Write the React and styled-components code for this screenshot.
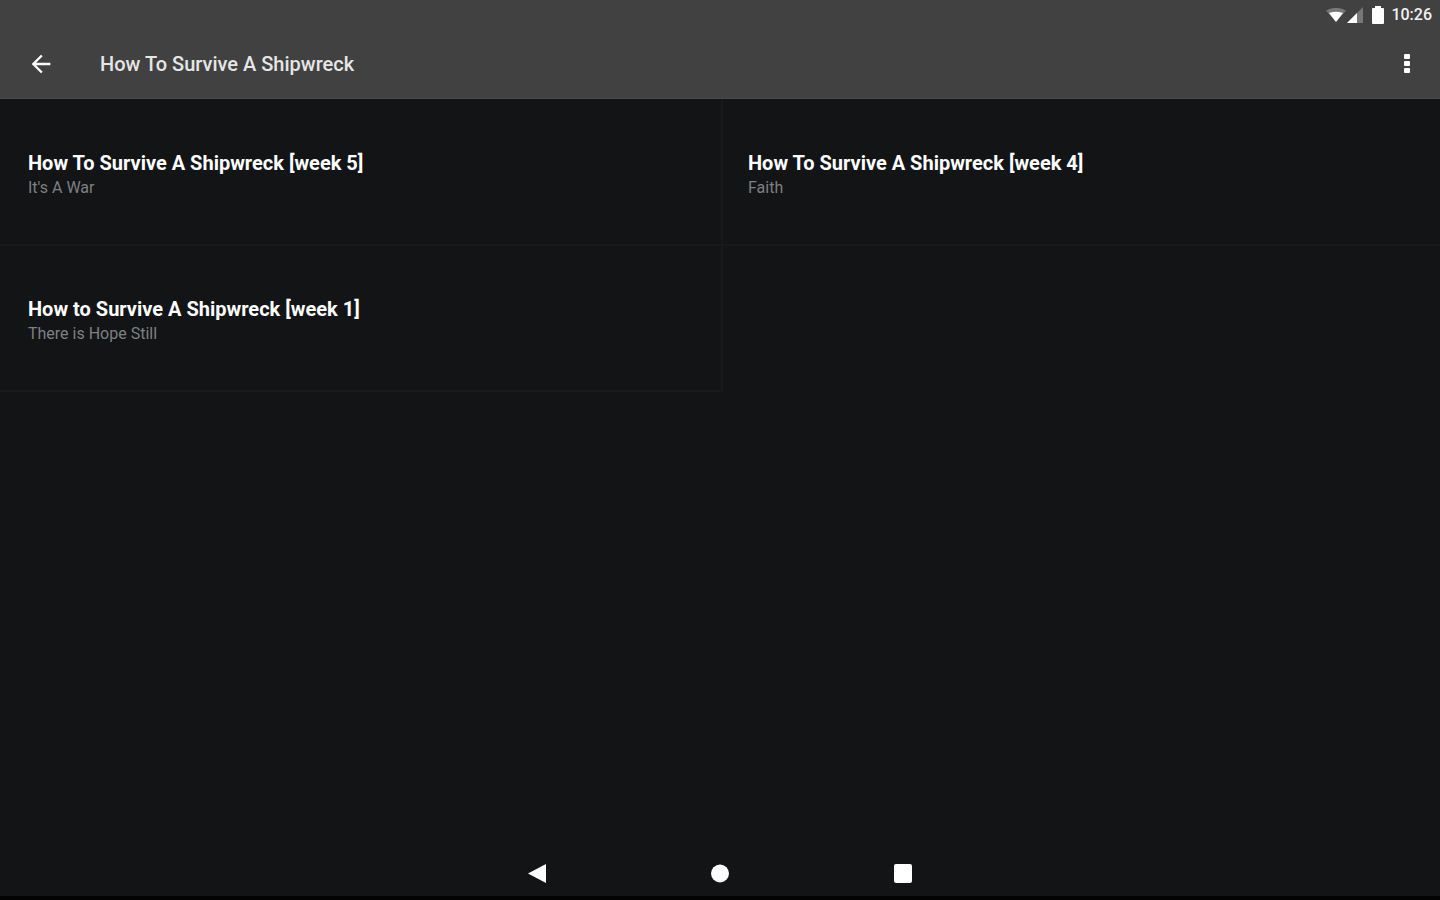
import React from 'react'
import styled, { createGlobalStyle } from 'styled-components'


const GlobalStyle = createGlobalStyle`
* {
    box-sizing: border-box;
}

body {
    margin: 0;
    background-color: #121416;
    color: #fff;
    font-family: Roboto, "Liberation Sans", sans-serif;
}
`

const Page = styled.div`
    display: flex;
    flex-direction: column;
    min-height: 100vh;
    border-bottom: 4px solid #040304;
`

const Header = styled.header`
    background-color: #414141;
    border-bottom: 1px solid #4a4a4a;
`

const StatusBar = styled.div`
    display: flex;
    justify-content: flex-end;
    align-items: center;
    height: 30px;
    padding: 0 8px;
    color: #f2f2f2;
`

const StatusIcon = styled.svg`
    display: block;
    width: ${props => props.$width}px;
    height: 18px;
    margin-right: ${props => props.$gap}px;
`

const Clock = styled.time`
    font-size: 16px;
    line-height: 20px;
    font-weight: 500;
`

const Toolbar = styled.div`
    display: flex;
    align-items: center;
    height: 68px;
    padding: 0 16px 0 24px;
`

const IconButton = styled.button`
    display: flex;
    justify-content: center;
    align-items: center;
    width: ${props => props.$width}px;
    height: 48px;
    padding: 0;
    border: none;
    background: none;
    color: #fff;
    cursor: pointer;
`

const Title = styled.h1`
    flex: 1;
    margin: 0;
    padding-left: 42px;
    color: #e6e6e6;
    font-size: 20px;
    line-height: 28px;
    font-weight: 500;
`

const Grid = styled.ul`
    flex: 1;
    display: grid;
    grid-template-columns: 1fr 1fr;
    align-content: start;
    margin: 0;
    padding: 1px 0 0;
    list-style: none;
`

const Cell = styled.li`
    border-bottom: 2px solid #17191b;

    &:nth-child(odd) {
        border-right: 2px solid #17191b;
        margin-right: -3px;
    }
`

const CellLink = styled.a`
    display: flex;
    flex-direction: column;
    justify-content: center;
    height: 144px;
    padding: 6px 28px 0;
    color: inherit;
    text-decoration: none;
`

const CellTitle = styled.span`
    font-size: 20px;
    line-height: 26px;
    font-weight: 700;
`

const CellSubtitle = styled.span`
    color: #7e8083;
    font-size: 16px;
    line-height: 24px;
`

const NavBar = styled.nav`
    display: flex;
    justify-content: center;
    gap: 135px;
    height: 46px;
`


const messages = [
    { title: 'How To Survive A Shipwreck [week 5]', subtitle: "It's A War" },
    { title: 'How To Survive A Shipwreck [week 4]', subtitle: 'Faith' },
    { title: 'How to Survive A Shipwreck [week 1]', subtitle: 'There is Hope Still' },
]


const App = () => {
    return (
        <Page>
            <GlobalStyle />
            <Header>
                <StatusBar>
                    <StatusIcon $width={20} $gap={0} viewBox='0 0 20 18' aria-label='Wi-Fi'>
                        <path d='M0 4.5Q10-1 20 4.5L10 16Z' fill='#777' />
                        <path d='M3 7Q10 4.5 17 7L10 16Z' fill='#fff' />
                    </StatusIcon>
                    <StatusIcon $width={18} $gap={8} viewBox='0 0 18 18' aria-label='Signal'>
                        <path d='M17 1V17H1Z' fill='#777' />
                        <path d='M11 7V17H1Z' fill='#fff' />
                    </StatusIcon>
                    <StatusIcon $width={12} $gap={7} viewBox='0 0 12 18' aria-label='Battery'>
                        <path d='M3 0h6v2h2a1 1 0 0 1 1 1v14a1 1 0 0 1-1 1H1a1 1 0 0 1-1-1V3a1 1 0 0 1 1-1h2z' fill='#fff' />
                    </StatusIcon>
                    <Clock>10:26</Clock>
                </StatusBar>
                <Toolbar>
                    <IconButton $width={34} aria-label='Back'>
                        <svg width='28' height='28' viewBox='0 0 24 24' fill='currentColor'>
                            <path d='M20 11H7.83l5.59-5.59L12 4l-8 8 8 8 1.41-1.41L7.83 13H20v-2z' />
                        </svg>
                    </IconButton>
                    <Title>How To Survive A Shipwreck</Title>
                    <IconButton $width={34} aria-label='More options'>
                        <svg width='6' height='20' viewBox='0 0 6 20' fill='currentColor'>
                            <rect x='0' y='0' width='6' height='5' rx='1' />
                            <rect x='0' y='7' width='6' height='5' rx='1' />
                            <rect x='0' y='14' width='6' height='5' rx='1' />
                        </svg>
                    </IconButton>
                </Toolbar>
            </Header>
            <Grid>
                {messages.map(message => (
                    <Cell key={message.title}>
                        <CellLink href='#'>
                            <CellTitle>{message.title}</CellTitle>
                            <CellSubtitle>{message.subtitle}</CellSubtitle>
                        </CellLink>
                    </Cell>
                ))}
            </Grid>
            <NavBar>
                <IconButton $width={48} aria-label='System back'>
                    <svg width='20' height='20' viewBox='0 0 20 20' fill='currentColor'>
                        <path d='M19 0V19L1 9.5Z' />
                    </svg>
                </IconButton>
                <IconButton $width={48} aria-label='Home'>
                    <svg width='20' height='20' viewBox='0 0 20 20' fill='currentColor'>
                        <circle cx='10' cy='9.5' r='9' />
                    </svg>
                </IconButton>
                <IconButton $width={48} aria-label='Recent apps'>
                    <svg width='20' height='20' viewBox='0 0 20 20' fill='currentColor'>
                        <rect x='1' y='0' width='18' height='19' rx='2' />
                    </svg>
                </IconButton>
            </NavBar>
        </Page>
    )
}

export default App
